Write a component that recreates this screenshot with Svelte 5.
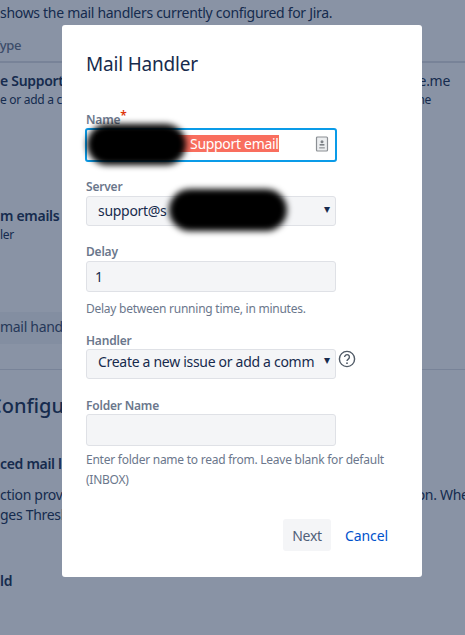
<script>
  let name = 'Support email';
</script>

<div class="page">
  <p class="intro">shows the mail handlers currently configured for Jira.</p>
  <div class="thead">Type</div>
  <div class="row first">
    <strong>e Support</strong>
    <span class="end">e.me</span>
  </div>
  <div class="row sub">
    <span>e or add a comment</span>
    <span class="end far">ne</span>
  </div>
  <div class="row second"><strong>m emails</strong></div>
  <div class="row sub"><span>ler</span></div>
  <div class="band">mail handlers</div>
  <hr />
  <h2>Configure</h2>
  <div class="row third"><strong>ced mail loop</strong></div>
  <div class="row para">
    <span>ction provides</span>
    <span class="edge">on. When</span>
  </div>
  <div class="row para2"><span>ges Threshold</span></div>
  <div class="row fourth"><strong>ld</strong></div>
</div>

<div class="overlay"></div>

<div class="modal" role="dialog" aria-labelledby="modal-title">
  <h1 id="modal-title">Mail Handler</h1>

  <div class="field name-field">
    <span class="label tight">Name<span class="req">*</span></span>
    <div class="control focused">
      <span class="selected"><span class="spacer"></span>{name}</span>
      <svg class="contact" width="14" height="16" viewBox="0 0 14 16" aria-hidden="true">
        <rect x="1.5" y="1" width="11" height="14" rx="1" fill="#eceef0" stroke="#8b8f94" stroke-width="1.2" />
        <circle cx="7" cy="5.8" r="1.5" fill="#7d8186" />
        <rect x="4.6" y="8" width="4.8" height="1.6" fill="#7d8186" />
        <rect x="4.2" y="11" width="5.6" height="1.6" fill="#a6a9ad" />
      </svg>
    </div>
    <div class="blob blob-name"></div>
  </div>

  <div class="field server-field">
    <span class="label">Server</span>
    <div class="select-wrap">
      <select class="control">
        <option>support@s</option>
      </select>
      <span class="arrow">▾</span>
    </div>
    <div class="blob blob-server"></div>
  </div>

  <div class="field delay-field">
    <span class="label">Delay</span>
    <input class="control tall" value="1" />
    <p class="help">Delay between running time, in minutes.</p>
  </div>

  <div class="field handler-field">
    <span class="label tight">Handler</span>
    <div class="handler-row">
      <div class="select-wrap raised">
        <select class="control">
          <option>Create a new issue or add a comm</option>
        </select>
        <span class="arrow">▾</span>
      </div>
      <svg class="question" width="18" height="18" viewBox="0 0 18 18" aria-hidden="true">
        <circle cx="9" cy="9" r="7.6" fill="none" stroke="#505a66" stroke-width="1.4" />
        <path d="M6.6 7.1a2.4 2.4 0 1 1 3.7 2c-.9.6-1.3 1-1.3 2" fill="none" stroke="#505a66" stroke-width="1.4" />
        <circle cx="9" cy="13.2" r=".9" fill="#505a66" />
      </svg>
    </div>
  </div>

  <div class="field folder-field">
    <span class="label tight">Folder Name</span>
    <input class="control folder" />
    <p class="help two">Enter folder name to read from. Leave blank for default (INBOX)</p>
  </div>

  <div class="actions">
    <button class="next">Next</button>
    <button class="cancel">Cancel</button>
  </div>
</div>

<style>
  :global(body) {
    margin: 0;
    background: #fff;
    overflow: hidden;
  }

  .page {
    height: 635px;
    overflow: hidden;
    font-family: "Noto Sans", sans-serif;
    font-size: 14px;
    line-height: 20px;
    letter-spacing: -0.3px;
    color: #253858;
    box-sizing: border-box;
    padding-top: 3px;
  }

  .intro {
    margin: 0;
    white-space: nowrap;
  }

  .thead {
    margin-top: 12px;
    padding-bottom: 6px;
    height: 20px;
    text-indent: -7px;
    font-size: 13px;
    font-weight: 500;
    color: #6b778c;
    border-bottom: 2px solid #dfe1e6;
  }

  .row {
    display: flex;
    justify-content: space-between;
    white-space: nowrap;
  }

  strong {
    font-weight: 600;
  }

  .end {
    padding-right: 15px;
  }

  .far {
    padding-right: 34px;
  }

  .edge {
    margin-right: -12px;
  }

  .first { margin-top: 8px; }
  .sub { font-size: 12px; margin-top: -1px; }
  .second { margin-top: 96px; }

  .band {
    margin-top: 67px;
    height: 32px;
    width: 200px;
    line-height: 30px;
    background: #f4f5f7;
    color: #42526e;
    white-space: nowrap;
    overflow: hidden;
  }

  hr {
    border: 0;
    border-top: 1px solid #dfe1e6;
    margin: 25px 0 0;
  }

  h2 {
    margin: 21px 0 0;
    text-indent: -11px;
    font-size: 20px;
    line-height: 30px;
    font-weight: 500;
    letter-spacing: 0;
    white-space: nowrap;
  }

  .third { margin-top: 33px; }
  .para { margin-top: 11px; }
  .para2 { margin-top: 0; }
  .fourth { margin-top: 46px; }

  .overlay {
    position: fixed;
    inset: 0;
    background: rgba(9, 30, 66, 0.48);
  }

  .modal {
    position: fixed;
    left: 62px;
    top: 25px;
    width: 360px;
    height: 552px;
    box-sizing: border-box;
    padding: 24px;
    background: #fff;
    border-radius: 3px;
    font-family: "Noto Sans", sans-serif;
    font-size: 14px;
    letter-spacing: -0.3px;
    color: #172b4d;
  }

  h1 {
    margin: 0;
    font-size: 19px;
    line-height: 30px;
    font-weight: 400;
    letter-spacing: -0.2px;
  }

  .field {
    position: relative;
    width: 250px;
  }

  .name-field { margin-top: 31px; }
  .server-field { margin-top: 15px; }
  .delay-field { margin-top: 16px; }
  .handler-field { margin-top: 12px; }
  .folder-field { margin-top: 17px; }

  .label {
    display: block;
    height: 20px;
    font-size: 12px;
    line-height: 20px;
    font-weight: 600;
    letter-spacing: -0.2px;
    color: #6b778c;
    margin-bottom: -1px;
  }

  .tight {
    margin-bottom: -2px;
  }

  .req {
    color: #de350b;
    position: relative;
    top: -4px;
    left: 0;
  }

  .control {
    display: block;
    box-sizing: border-box;
    width: 250px;
    height: 30px;
    margin: 0;
    padding: 0 8px;
    border: 1px solid #dfe1e6;
    border-radius: 3px;
    background: #f4f5f7;
    color: #172b4d;
    font: inherit;
    letter-spacing: inherit;
    outline: none;
    appearance: none;
  }

  .tall {
    height: 31px;
  }

  .folder {
    height: 32px;
  }

  select.control {
    padding: 0 18px 2px 11px;
  }

  .raised select.control {
    padding-bottom: 6px;
  }

  .select-wrap {
    position: relative;
    width: 250px;
    flex: none;
  }

  .arrow {
    position: absolute;
    right: 6px;
    top: 3px;
    font-size: 12px;
    line-height: 20px;
    color: #172b4d;
    pointer-events: none;
  }

  .raised .arrow {
    top: 1px;
  }

  .focused {
    display: flex;
    align-items: center;
    justify-content: space-between;
    width: 252px;
    height: 34px;
    margin-left: -1px;
    padding: 0 6px 3px 9px;
    background: #fff;
    border: 2px solid #0a9be8;
  }

  .selected {
    background: #f96e5e;
    color: #fff;
    line-height: 17px;
    white-space: nowrap;
  }

  .spacer {
    display: inline-block;
    width: 94px;
  }

  .contact {
    flex: none;
  }

  .blob {
    position: absolute;
    background: #000;
    filter: blur(3px);
    border-radius: 24px;
  }

  .blob-name {
    left: 1px;
    top: 14px;
    width: 99px;
    height: 41px;
  }

  .blob-server {
    left: 83px;
    top: 12px;
    width: 118px;
    height: 42px;
  }

  .help {
    margin: 7px 0 0;
    font-size: 12px;
    line-height: 20px;
    letter-spacing: -0.25px;
    color: #6b778c;
  }

  .two {
    width: 310px;
    margin-top: 4px;
  }

  .handler-row {
    display: flex;
    align-items: flex-start;
    gap: 2px;
  }

  .question {
    flex: none;
    margin-top: 1px;
  }

  .actions {
    position: absolute;
    right: 24px;
    bottom: 26px;
    display: flex;
    gap: 6px;
  }

  button {
    height: 32px;
    border: 0;
    border-radius: 3px;
    font: inherit;
    letter-spacing: inherit;
    padding: 0 8px;
    background: none;
  }

  .next {
    width: 48px;
    background: #f4f5f7;
    color: #505f79;
  }

  .cancel {
    color: #0052cc;
    padding: 0 10px 0 8px;
    letter-spacing: -0.1px;
  }
</style>
